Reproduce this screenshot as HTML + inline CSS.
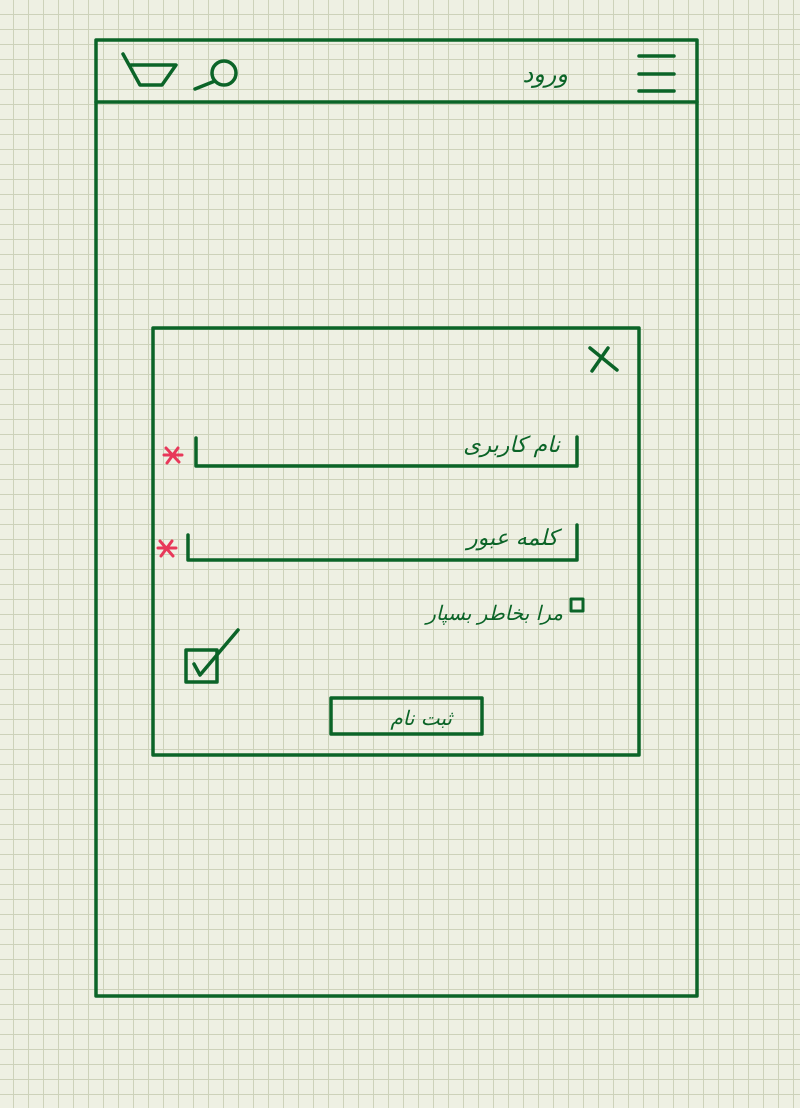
<!DOCTYPE html>
<html><head><meta charset="utf-8"><style>
html,body{margin:0;padding:0}
body{width:800px;height:1108px;background-color:#eef0e3;
background-image:linear-gradient(to right,#cdd2ba 1px,transparent 1px),linear-gradient(to bottom,#cdd2ba 1px,transparent 1px);
background-size:15px 15px;background-position:13px 14px;overflow:hidden}
svg{position:absolute;left:0;top:0}
text{font-family:"DejaVu Sans","Liberation Sans",sans-serif;fill:#0b6428;font-style:italic}
</style></head><body>
<svg width="800" height="1108" viewBox="0 0 800 1108" fill="none" stroke="#0b6428" stroke-width="3.5" stroke-linecap="round" stroke-linejoin="round">
<rect x="96" y="40" width="601" height="956"/>
<line x1="96" y1="102" x2="697" y2="102"/>
<path d="M123 54 L140 85 L162 85 L176 65 L131 65"/>
<circle cx="224" cy="73" r="12"/>
<line x1="215" y1="81" x2="195" y2="89"/>
<line x1="639" y1="56" x2="674" y2="56"/>
<line x1="639" y1="74" x2="674" y2="74"/>
<line x1="639" y1="91" x2="674" y2="91"/>
<text x="568" y="82" font-size="24" text-anchor="start" stroke="none" direction="rtl">ورود</text>
<rect x="153" y="328" width="486" height="427"/>
<path d="M590 348 L617 370 M608 348 L592 371"/>
<path d="M196 438 L196 466 L577 466 L577 437"/>
<path d="M188 535 L188 560 L577 560 L577 525"/>
<text x="560" y="452" font-size="22" text-anchor="start" stroke="none" direction="rtl">نام کاربری</text>
<text x="558" y="545" font-size="22" text-anchor="start" stroke="none" direction="rtl">کلمه عبور</text>
<rect x="571" y="599" width="12" height="12" stroke-width="3"/>
<text x="563" y="620" font-size="20" text-anchor="start" stroke="none" direction="rtl">مرا بخاطر بسپار</text>
<rect x="186" y="650" width="31" height="32"/>
<path d="M194 664 L200 675 L238 630"/>
<rect x="331" y="698" width="151" height="36"/>
<text x="452" y="725" font-size="20" text-anchor="start" stroke="none" direction="rtl">ثبت نام</text>
<g stroke="#e8385a" stroke-width="3">
<path d="M166 448 L179 462 M178 448 L167 463 M164 455 L182 455"/>
<path d="M160 541 L173 556 M172 541 L161 556 M158 548 L176 548"/>
</g>
</svg>
</body></html>
